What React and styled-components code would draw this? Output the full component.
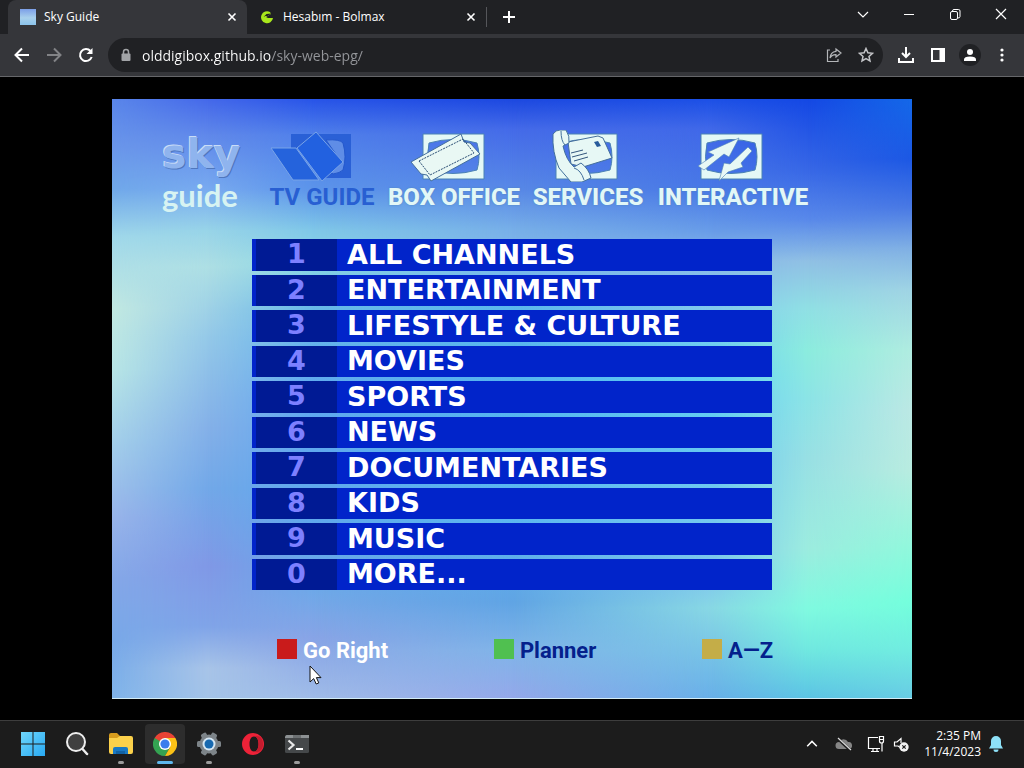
import React from "react";
import styled, { createGlobalStyle } from "styled-components";

const Global = createGlobalStyle`
  * { box-sizing: border-box; }
  body { margin: 0; background: #000; font-family: "Open Sans", "Noto Sans", sans-serif; }
  button { border: 0; padding: 0; margin: 0; background: none; color: inherit; font: inherit; }
  a { color: inherit; text-decoration: none; }
  svg { display: block; flex: none; }
`;

const Desktop = styled.div`
  min-height: 100vh;
  display: flex;
  flex-direction: column;
  background: #000;
`;

/* ---------- browser ---------- */
const TabStrip = styled.div`
  display: flex;
  height: 34px;
  padding-left: 8px;
  background: #202124;
  color: #fff;
`;
const Tab = styled.div`
  display: flex;
  align-items: center;
  gap: 8px;
  width: 239px;
  padding: 0 7px 0 12px;
  font-size: 12px;
  line-height: 34px;
  border-radius: 8px 8px 0 0;
  background: ${(p) => (p.$active ? "#35363a" : "transparent")};
`;
const TabTitle = styled.span`
  flex: 1;
  white-space: nowrap;
`;
const IconButton = styled.button`
  display: flex;
  align-items: center;
  justify-content: center;
  width: ${(p) => p.$w || 32}px;
  height: ${(p) => p.$h || 32}px;
  color: ${(p) => p.$color || "#fff"};
`;
const TabDivider = styled.span`
  width: 1px;
  height: 20px;
  margin: 7px 6px 0 0;
  background: #55565a;
`;
const WindowControls = styled.div`
  display: flex;
  margin-left: auto;
`;
const Toolbar = styled.div`
  display: flex;
  align-items: center;
  height: 43px;
  padding: 0 6px;
  background: #35363a;
  border-bottom: 1px solid #66676a;
`;
const Omnibox = styled.form`
  flex: 1;
  display: flex;
  align-items: center;
  height: 34px;
  margin: 0 7px 0 6px;
  padding: 0 1px 0 12px;
  border-radius: 17px;
  background: #202124;
`;
const Address = styled.input`
  flex: 1;
  min-width: 0;
  height: 24px;
  margin-left: 10px;
  padding: 0;
  border: 0;
  outline: 0;
  font: 14px "Open Sans", "Noto Sans", sans-serif;
  color: transparent;
  background: linear-gradient(90deg, #fff 129px, #95979b 129px);
  background-clip: text;
  -webkit-background-clip: text;
`;
const Avatar = styled.span`
  display: flex;
  align-items: center;
  justify-content: center;
  width: 22px;
  height: 22px;
  border-radius: 50%;
  background: #202124;
`;

/* ---------- guide page ---------- */
const Page = styled.main`
  flex: 1;
  display: flex;
  justify-content: center;
  align-items: flex-start;
  padding: 22px 16px 21px;
`;
const Screen = styled.div`
  position: relative;
  isolation: isolate;
  width: 100%;
  max-width: 800px;
  min-height: 600px;
  padding-top: 31px;
  border-bottom: 1px solid #d3ecf6;
`;
/* One vertical band of sky; each band fades in over the one before it. */
const SkyBand = styled.div`
  position: absolute;
  inset: 0;
  z-index: -1;
  background: linear-gradient(180deg, ${(p) => p.$stops});
  mask-image: ${(p) => (p.$to ? `linear-gradient(90deg, transparent ${p.$from}%, #000 ${p.$to}%)` : "none")};
`;
const Nav = styled.nav`
  display: flex;
  padding-left: 50px;
`;
const Brand = styled.div`
  width: 107px;
  font-weight: 700;
`;
const BrandSky = styled.div`
  font-family: "DejaVu Sans", sans-serif;
  font-size: 41px;
  line-height: 48px;
  color: #8fb4ee;
  text-shadow: -1px -1px 0 #c9dcf7, 1px 1px 0 #5077bd;
`;
const BrandGuide = styled.div`
  font-family: Lato, sans-serif;
  font-size: 31px;
  line-height: 34px;
  color: #d7f3f2;
`;
const NavLink = styled.a`
  display: flex;
  flex-direction: column;
  align-items: center;
  width: ${(p) => p.$w}px;
  margin-right: 13px;
  font-family: Roboto, "Liberation Sans", sans-serif;
  font-weight: ${(p) => (p.$active ? 700 : 800)};
  font-size: 24px;
  line-height: 30px;
  white-space: nowrap;
  color: ${(p) => (p.$active ? "#285fd2" : "#e2f7f7")};
  text-shadow: ${(p) => (p.$active ? "none" : "0 0 2px #4f86b8")};
`;
const Menu = styled.ol`
  display: grid;
  grid-template-rows: repeat(10, 1fr);
  gap: 4px;
  height: 351px;
  width: 65%;
  margin: 27px auto 0;
  padding: 0;
  list-style: none;
`;
const MenuRow = styled.li`
  display: flex;
  background: #0124ca;
`;
const MenuLink = styled.a`
  flex: 1;
  display: flex;
  align-items: center;
  border-left: 4px solid #0124ca;
  font-family: "DejaVu Sans", sans-serif;
  font-weight: 700;
  font-size: 27px;
  line-height: 30px;
  color: #fff;
`;
const MenuNumber = styled.span`
  align-self: stretch;
  width: 81px;
  margin-right: 10px;
  text-align: center;
  color: #7d80ff;
  background: #001a94;
`;
const ColourKeys = styled.div`
  display: flex;
  justify-content: space-between;
  width: 62%;
  margin: 45px 0 0 165px;
`;
const KeyButton = styled.button`
  display: flex;
  align-items: center;
  gap: 6px;
  font-family: Roboto, "Liberation Sans", sans-serif;
  font-weight: 700;
  font-size: 22px;
  line-height: 32px;
  white-space: nowrap;
  color: ${(p) => p.$text};
  &::before {
    content: "";
    width: 20px;
    height: 20px;
    margin-bottom: 4px;
    background: ${(p) => p.$key};
  }
`;
const Pointer = styled.svg`
  position: absolute;
  left: 197px;
  top: 566px;
`;

/* ---------- taskbar ---------- */
const Taskbar = styled.footer`
  display: flex;
  align-items: center;
  justify-content: space-between;
  height: 49px;
  padding: 0 19px 2px 13px;
  background: #1c1c1c;
  border-top: 1px solid #3d3d3d;
  color: #fff;
`;
const Apps = styled.div`
  display: flex;
  gap: 4px;
`;
const AppButton = styled.button`
  display: flex;
  flex-direction: column;
  align-items: center;
  justify-content: space-between;
  width: 40px;
  height: 40px;
  padding-top: 8px;
  border-radius: 4px;
  background: ${(p) => (p.$active ? "#2d2d2d" : "transparent")};
  &::after {
    content: "";
    width: ${(p) => (p.$active ? 16 : 6)}px;
    height: 3px;
    border-radius: 2px;
    background: ${(p) => (p.$active ? "#5fb8ee" : p.$open ? "#9b9b9b" : "transparent")};
  }
`;
const Tray = styled.div`
  display: flex;
  align-items: center;
`;
const Clock = styled.button`
  margin: 0 6px 0 14px;
  text-align: right;
  font-size: 12px;
  line-height: 16px;
`;

const Line = ({ size = 16, w = 2, children, ...rest }) => (
  <svg width={size} height={size} viewBox="0 0 16 16" fill="none" stroke="currentColor" strokeWidth={w} {...rest}>
    {children}
  </svg>
);
const CloseGlyph = () => (
  <Line w={1.6}><path d="M4.500 4.500l7 7M11.500 4.500l-7 7" /></Line>
);

const SkyFavicon = () => (
  <svg width="16" height="16" viewBox="0 0 16 16">
    <defs>
      <linearGradient id="fav" x1="0" y1="0" x2="0" y2="1">
        <stop offset="0" stopColor="#7c9fe8" />
        <stop offset=".55" stopColor="#a8d0ec" />
        <stop offset="1" stopColor="#8cc4ec" />
      </linearGradient>
    </defs>
    <rect width="16" height="16" fill="url(#fav)" />
  </svg>
);
const BolmaxFavicon = () => (
  <svg width="16" height="16" viewBox="0 0 16 16">
    <path d="M11 3A6 6 0 1 0 14 9H9l-2-1 5-3Z" fill="#a9e81c" />
    <path d="M4.500 8l3-3 5-.5-4 2.500H6.500Z" fill="#202124" />
  </svg>
);

const bands = [
  { to: 0, stops: "#5a86ea, #6a96ea 8%, #70a8ea 15%, #a0d8ea 23%, #c2e9e2 35%, #b8e6e6 45%, #a4d0ea 57%, #98b4ea 70%, #84a8e8 80%, #78a8e8 90%, #80b4ea" },
  { to: 12, stops: "#4468ea, #6088ea 6%, #78aaf0 15%, #98d4e8 22%, #aedfe4 28%, #94c8e8 40%, #84b0e8 55%, #72a8e8 65%, #8098e6 78%, #80a4e8 88%, #a8c4e8 95%, #a4c4e8" },
  { to: 25, stops: "#2854e8, #5080ea 6%, #5c94ea 15%, #80c8e8 22%, #8cd8e4 27%, #68b8e8 35%, #60a8f0 50%, #60a8ec 70%, #6ea8e8 82%, #88a4e6 90%, #a0bce8" },
  { to: 50, stops: "#1c48e0, #446ae8 5%, #5888e6 15%, #78b0e8 22%, #84b8ea 27%, #5cb8ec 33%, #54b4f0 50%, #5cb8f0 70%, #60a4e4 84%, #80b4e8 92%, #94a8ea" },
  { to: 75, stops: "#1c50e6, #4068e8 5%, #4878e6 15%, #689ce8 22%, #88b8e8 27%, #88c8ec 33%, #60d0f4 46%, #68c8f0 60%, #80c8ec 80%, #88d8e4 85%, #78c4e6 92%, #68b0e8" },
  { to: 87, stops: "#1448e4, #3868e6 12%, #5888ea 20%, #90c0e4 27%, #90e0e4 35%, #8cecde 42%, #8ce4e6 50%, #98e0e4 60%, #9cecdf 75%, #80fae0 85%, #70e8e0 92%, #5cc4e4" },
  { to: 100, stops: "#1468e8, #1c58e4 10%, #4878e4 18%, #80b0e4 25%, #a0d4e4 32%, #b0ece0 42%, #bce8e4 52%, #b8ece0 62%, #90f8dc 75%, #74fedc 84%, #70ece0 92%, #68cce4" },
];

const Frame = ({ x }) => (
  <g transform={`translate(${x} 4)`}>
    <path d="M0 0H61V45H0Z M6 9Q30 2 54 9Q58 23 54 36Q30 43 6 36Q3 23 6 9Z" fillRule="evenodd" fill="#e4f8f6" stroke="#4b82b4" strokeWidth="1" />
  </g>
);
const TvIcon = () => (
  <svg width="105" height="52" viewBox="0 0 105 52">
    <path d="M21 4h60v44H52V20H21Z" fill="#2a60d6" />
    <path d="M56 10q14-1 17 3 4 14 0 27-3 3-10 4L58 40 72 33Z" fill="#5f8de6" stroke="#2458cc" />
    <path d="M1 18h25l23 32H23Z" fill="#2563dc" stroke="#79a4e8" />
    <path d="M46 2l27 30-21 19L27 18Z" fill="#2261e0" stroke="#79a4e8" />
  </svg>
);
const BoxOfficeIcon = () => (
  <svg width="133" height="52" viewBox="0 0 133 52">
    <Frame x={35} />
    <path d="M23 32L73 4l3 8 6 1 10 11-49 27-4-6-6-1Z" fill="#e9f8f4" stroke="#446f9c" />
    <path d="M31 31l44-22 11 14-44 22Z" fill="none" stroke="#284c73" strokeDasharray="2 1" />
  </svg>
);
const ServicesIcon = () => (
  <svg width="111" height="52" viewBox="0 0 111 52">
    <Frame x={23} />
    <path d="M35 12L65 6l5 2 9 20-29 9-12-3Z" fill="#e7f8f5" stroke="#446f9c" />
    <path d="M20 4Q23 0 27 0h6q4 6 3 13l-6 3q3 14 11 21l7-4q8 6 10 15l-9 4H38L26 38Q19 22 20 4Z" fill="#e7f8f5" stroke="#42709c" />
    <path d="M28 1q0 10 4 14M41 38q7 2 10 12" fill="none" stroke="#42709c" />
    <path d="M61 12l4-1 3 5-4 1Z" fill="#285b9b" />
    <path d="M38 23l12-3M39 27l15-4M41 31l14-4" stroke="#34577d" fill="none" />
  </svg>
);
const InteractiveIcon = () => (
  <svg width="153" height="52" viewBox="0 0 153 52">
    <Frame x={44} />
    <path d="M41 36L57 25l-6-3L82 8 72 27l-5-3-20 16Z" fill="#e7f8f5" stroke="#4b82b4" strokeWidth=".6" />
    <path d="M91 17l4 4-11 12 2 4-15 5-9 9 5-18 6 1Z" fill="#e7f8f5" stroke="#4b82b4" strokeWidth=".6" />
  </svg>
);

const sections = [
  { label: "TV GUIDE", w: 106, icon: <TvIcon />, active: true },
  { label: "BOX OFFICE", w: 132, icon: <BoxOfficeIcon /> },
  { label: "SERVICES", w: 110, icon: <ServicesIcon /> },
  { label: "INTERACTIVE", w: 154, icon: <InteractiveIcon /> },
];
const channels = [
  "ALL CHANNELS", "ENTERTAINMENT", "LIFESTYLE & CULTURE", "MOVIES", "SPORTS",
  "NEWS", "DOCUMENTARIES", "KIDS", "MUSIC", "MORE...",
];

const WindowsLogo = () => (
  <svg width="24" height="24" viewBox="0 0 24 24">
    <defs>
      <linearGradient id="win" x1="0" y1="0" x2="1" y2="1">
        <stop offset="0" stopColor="#6fd6fb" />
        <stop offset="1" stopColor="#28a9f2" />
      </linearGradient>
    </defs>
    <path d="M0 0h11.500v11.500H0ZM12.500 0H24v11.500H12.500ZM0 12.500h11.500V24H0ZM12.500 12.500H24V24H12.500Z" fill="url(#win)" />
  </svg>
);
const SearchLogo = () => (
  <svg width="24" height="24" viewBox="0 0 24 24" fill="#404040" stroke="#eee" strokeLinecap="round">
    <circle cx="11" cy="10" r="9" strokeWidth="2" />
    <path d="M17.500 17l4.500 5" strokeWidth="2.500" />
  </svg>
);
const FolderLogo = () => (
  <svg width="26" height="24" viewBox="0 0 26 24">
    <path d="M1 3q0-2 2-2h6l3 3h11v6H1Z" fill="#d79c1d" />
    <path d="M1 6h8l3-2h11q2 0 2 2v14q0 2-2 2H3q-2 0-2-2Z" fill="#fbd14b" />
    <path d="M5 22v-5q0-2 2-2h11q2 0 2 2v5Z" fill="#1979c4" />
    <path d="M8 19h9v3H8Z" fill="#1162a4" />
  </svg>
);
const ChromeLogo = () => (
  <svg width="24" height="24" viewBox="0 0 24 24">
    <path d="M12 12L1.600 6A12 12 0 0 1 22.400 6Z" fill="#e94335" />
    <path d="M1.600 6A12 12 0 0 0 12 24L17.200 15 12 12Z" fill="#34a352" />
    <path d="M22.400 6A12 12 0 0 1 12 24L17.200 15 12 6Z" fill="#fbc116" />
    <path d="M1.600 6L6.800 15 12 12V6Z" fill="#34a352" />
    <path d="M1.600 6h20.800H12L6.800 9Z" fill="#e94335" />
    <circle cx="12" cy="12" r="6" fill="#fff" />
    <circle cx="12" cy="12" r="4.600" fill="#3b7ded" />
  </svg>
);
const SettingsLogo = () => (
  <svg width="24" height="24" viewBox="0 0 24 24">
    <g fill="#7d8489">
      {[30, 90, 150].map((a) => (
        <rect key={a} x="9" y="0" width="6" height="24" rx="1.500" transform={`rotate(${a} 12 12)`} />
      ))}
      <circle cx="12" cy="12" r="9.500" />
    </g>
    <circle cx="12" cy="12" r="6.500" fill="#d6e7f3" />
    <circle cx="12" cy="12" r="4.500" fill="#1769b0" />
  </svg>
);
const OperaLogo = () => (
  <svg width="24" height="24" viewBox="0 0 24 24">
    <path d="M12 1a11 11 0 1 0 0 22 11 11 0 0 0 0-22Z M13 4.500c3 0 4.500 3.500 4.500 7.500s-1.500 7.500-4.500 7.500S8.500 16 8.500 12 10 4.500 13 4.500Z" fill="#ed2238" fillRule="evenodd" />
    <path d="M13 4.500c7-2 9.500 4 9 9-1 6-6 8-9 6 3 0 4.500-3.500 4.500-7.500S16 4.500 13 4.500Z" fill="#c41c2e" />
  </svg>
);
const TerminalLogo = () => (
  <svg width="24" height="24" viewBox="0 0 24 24">
    <rect x="0" y="3" width="24" height="18" rx="1.500" fill="#45484a" />
    <path d="M1.500 3H24v3H0V4.500Z" fill="#8d9193" />
    <path d="M8 3h8v3H8Z" fill="#6c7072" />
    <path d="M3.500 8.500l5 4.500-5 4.500" fill="none" stroke="#e8e8e8" strokeWidth="2.200" />
    <path d="M11 17h7" stroke="#fff" strokeWidth="2" />
  </svg>
);
const apps = [
  { name: "Start", icon: <WindowsLogo /> },
  { name: "Search", icon: <SearchLogo /> },
  { name: "File Explorer", icon: <FolderLogo />, open: true },
  { name: "Google Chrome", icon: <ChromeLogo />, active: true },
  { name: "Settings", icon: <SettingsLogo />, open: true },
  { name: "Opera", icon: <OperaLogo /> },
  { name: "Terminal", icon: <TerminalLogo />, open: true },
];

export default function App() {
  return (
    <Desktop>
      <Global />
      <header>
        <TabStrip>
          <Tab $active>
            <SkyFavicon />
            <TabTitle>Sky Guide</TabTitle>
            <IconButton $w={16} $h={16} aria-label="Close Sky Guide"><CloseGlyph /></IconButton>
          </Tab>
          <Tab>
            <BolmaxFavicon />
            <TabTitle>Hesabım - Bolmax</TabTitle>
            <IconButton $w={16} $h={16} aria-label="Close Hesabım"><CloseGlyph /></IconButton>
          </Tab>
          <TabDivider />
          <IconButton $h={34} aria-label="New tab"><Line><path d="M8 2v12M2 8h12" /></Line></IconButton>
          <WindowControls>
            <IconButton $w={46} $h={28} aria-label="Search tabs"><Line w={1.2}><path d="M3 6l5 5 5-5" /></Line></IconButton>
            <IconButton $w={46} $h={28} aria-label="Minimize"><Line w={1}><path d="M3 8.500h10" /></Line></IconButton>
            <IconButton $w={46} $h={28} aria-label="Restore"><Line w={1}><rect x="3.500" y="5.500" width="7" height="8" rx="1.500" /><path d="M5.500 5.500V5q0-1.500 1.500-1.500h4.500q1.500 0 1.500 1.500v5.500q0 1.500-2 1.500" /></Line></IconButton>
            <IconButton $w={46} $h={28} aria-label="Close"><Line w={1.2}><path d="M3 3l10 10M13 3L3 13" /></Line></IconButton>
          </WindowControls>
        </TabStrip>
        <Toolbar>
          <IconButton aria-label="Back"><Line><path d="M15 8H2M8 1.500L1.500 8 8 14.500" /></Line></IconButton>
          <IconButton aria-label="Forward" $color="#828386"><Line><path d="M1 8h13M8 1.500L14.500 8 8 14.500" /></Line></IconButton>
          <IconButton aria-label="Reload"><Line><path d="M13.700 10A6 6 0 1 1 12.500 4" /><path d="M14.500 1v6h-6Z" fill="currentColor" stroke="none" /></Line></IconButton>
          <Omnibox>
            <svg width="12" height="14" viewBox="0 0 12 14">
              <path d="M3.500 6V4a2.500 2.500 0 0 1 5 0v2" fill="none" stroke="#a2a4a7" strokeWidth="1.500" />
              <rect x="1.500" y="5.500" width="9" height="7.500" rx="1" fill="#a2a4a7" />
            </svg>
            <Address aria-label="Address" defaultValue="olddigibox.github.io/sky-web-epg/" />
            <IconButton type="button" aria-label="Share" $color="#b4b6b9"><Line w={1.2}><path d="M4 3H1.500v11.500H12V12" /><path d="M10 2l5 4-5 4V7.700Q6 7.500 4 11q.5-6 6-6.700Z" /></Line></IconButton>
            <IconButton type="button" aria-label="Bookmark" $color="#c4c5c8"><Line w={1.5}><path d="M8 1.500l1.900 4.300 4.600.5-3.500 3.100 1 4.600L8 11.700 4 14l1-4.600-3.500-3.100 4.600-.5Z" /></Line></IconButton>
          </Omnibox>
          <IconButton aria-label="Downloads"><Line w={2}><path d="M8 0v9M4 6l4 4 4-4M1 11v4h14v-4" /></Line></IconButton>
          <IconButton aria-label="Side panel"><Line w={2}><path d="M2 2h12v12H2Z" /><path d="M9.500 2H14v12H9.500Z" fill="currentColor" stroke="none" /></Line></IconButton>
          <IconButton aria-label="Profile"><Avatar><svg width="14" height="14" viewBox="0 0 14 14" fill="#fff"><circle cx="7" cy="4" r="3" /><path d="M1 13v-1.500Q1 8.500 7 8.500t6 3V13Z" /></svg></Avatar></IconButton>
          <IconButton aria-label="Menu"><svg width="16" height="16" viewBox="0 0 16 16" fill="#fff"><circle cx="8" cy="3" r="1.600" /><circle cx="8" cy="8" r="1.600" /><circle cx="8" cy="13" r="1.600" /></svg></IconButton>
        </Toolbar>
      </header>

      <Page>
        <Screen>
          {bands.map((b, i) => (
            <SkyBand key={b.to} $from={i ? bands[i - 1].to : 0} $to={b.to} $stops={b.stops} />
          ))}
          <Nav>
            <Brand>
              <BrandSky>sky</BrandSky>
              <BrandGuide>guide</BrandGuide>
            </Brand>
            {sections.map((s) => (
              <NavLink key={s.label} href="#" $w={s.w} $active={s.active}>
                {s.icon}
                {s.label}
              </NavLink>
            ))}
          </Nav>
          <Menu>
            {channels.map((name, i) => (
              <MenuRow key={name}>
                <MenuLink href="#">
                  <MenuNumber>{(i + 1) % 10}</MenuNumber>
                  {name}
                </MenuLink>
              </MenuRow>
            ))}
          </Menu>
          <ColourKeys>
            <KeyButton $key="#c91b1b" $text="#fff">Go Right</KeyButton>
            <KeyButton $key="#50c050" $text="#04208c">Planner</KeyButton>
            <KeyButton $key="#c4ad48" $text="#04208c">A—Z</KeyButton>
          </ColourKeys>
          <Pointer width="14" height="20" viewBox="0 0 14 20">
            <path d="M1 1v16l3.700-3.400L7.200 19l2.600-1.100-2.400-5.300H12Z" fill="#fff" stroke="#111" strokeWidth="1" />
          </Pointer>
        </Screen>
      </Page>

      <Taskbar>
        <Apps>
          {apps.map((a) => (
            <AppButton key={a.name} aria-label={a.name} $open={a.open} $active={a.active}>{a.icon}</AppButton>
          ))}
        </Apps>
        <Tray>
          <IconButton aria-label="Show hidden icons"><Line w={1.7} size={14}><path d="M2.500 10.500L8 5l5.500 5.500" /></Line></IconButton>
          <IconButton aria-label="OneDrive">
            <svg width="18" height="16" viewBox="0 0 18 16">
              <path d="M4 13a3.500 3.500 0 0 1 0-7 5 5 0 0 1 9 0 3.500 3.500 0 0 1 1 7Z" fill="#858585" />
              <path d="M2 2l13 12" stroke="#1c1c1c" strokeWidth="3" />
              <path d="M3 2l13 12" stroke="#ddd" strokeWidth="1.200" />
            </svg>
          </IconButton>
          <IconButton aria-label="Network">
            <svg width="18" height="18" viewBox="0 0 18 18" fill="none" stroke="#fff" strokeWidth="1.200">
              <path d="M11 2.500H1.500v11H13M4 16.500h8M6 13.500v3M10 13.500v3M15 8v8.500" />
              <path d="M12.500 1.500h4V6q0 2-2 2t-2-2ZM12.500 4.500h4" />
            </svg>
          </IconButton>
          <IconButton $w={18} aria-label="Muted">
            <svg width="16" height="16" viewBox="0 0 16 16">
              <path d="M8 12L5 10H1.500V6H4l4-3.500V7" fill="none" stroke="#fff" strokeWidth="1.200" />
              <circle cx="11" cy="11" r="4.700" fill="#f2f2f2" />
              <path d="M9.300 9.300l3.400 3.400M12.700 9.300l-3.400 3.400" stroke="#1c1c1c" strokeWidth="1.200" />
            </svg>
          </IconButton>
          <Clock>2:35 PM<br />11/4/2023</Clock>
          <IconButton $w={18} aria-label="Notifications">
            <svg width="16" height="18" viewBox="0 0 16 18" fill="#8ee1f8">
              <path d="M8 1a5 5 0 0 1 5 5v4l2 3.500H1L3 10V6a5 5 0 0 1 5-5ZM5.500 14.500h5a2.500 2.500 0 0 1-5 0Z" />
            </svg>
          </IconButton>
        </Tray>
      </Taskbar>
    </Desktop>
  );
}
